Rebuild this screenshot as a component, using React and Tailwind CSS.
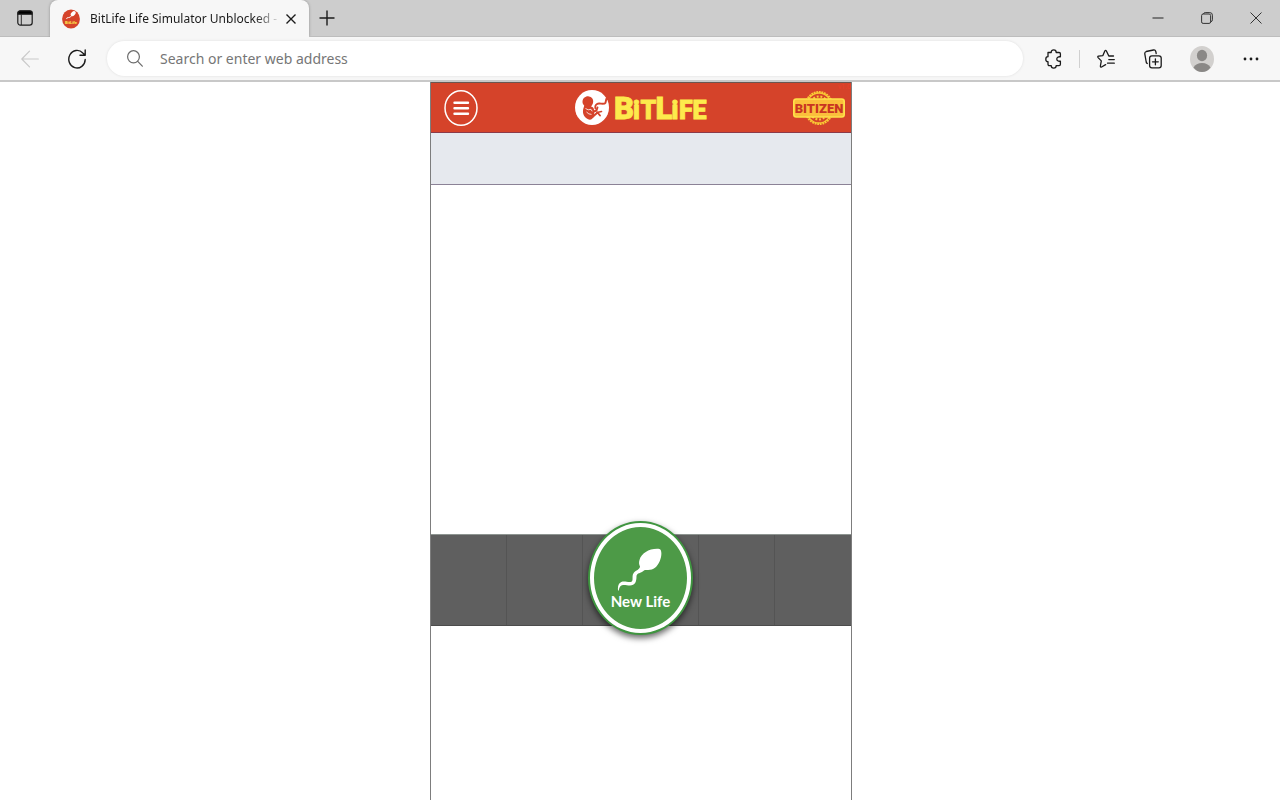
import React from 'react';

function TabActionsIcon() {
  return (
    <svg className="w-4 h-4" viewBox="0 0 16 16" fill="none" stroke="#1b1b1b" strokeWidth="1.2">
      <rect x="0.8" y="0.8" width="14.4" height="14.4" rx="2.6" />
      <path d="M1 2.8Q1 1 3 1h10q2 0 2 1.8V4.200H1Z" fill="#000" />
      <path d="M4.300 4.500v10.500" strokeWidth="0.9" />
    </svg>
  );
}

function Favicon() {
  return (
    <svg className="w-[18px] h-5 shrink-0" viewBox="0 0 18 20">
      <ellipse cx="9" cy="10" rx="8.900" ry="9.600" fill="#d5432a" />
      <path d="M4.500 10q.3-1.700 2.200-1.500T9.500 6.500" fill="none" stroke="#fff" strokeWidth="0.900" />
      <ellipse cx="11.200" cy="4.600" rx="2.900" ry="1.900" transform="rotate(-45 11.200 4.600)" fill="#fff" />
      <text x="9" y="14.800" textAnchor="middle" fontFamily="Roboto, sans-serif" fontWeight="900" fontSize="4" fill="#fde24a">BitLife</text>
    </svg>
  );
}

function FetusIcon() {
  return (
    <svg className="w-[34px] h-[35px]" viewBox="0 0 34 35">
      <ellipse cx="17" cy="17.500" rx="17" ry="17.500" fill="#fff" />
      <path fill="#d5432a" d="M7.500 12C7.500 8.300 10.500 6 13.800 6.400c3.600.4 5 3.600 4.200 6.600-.5 1.900-1.700 2.600-1.800 3.800 1.800.2 2.800 1.400 2.900 3.500.2 2.500.4 4.800-.5 6.400-1.300 2.700-3.200 3.600-5.500 2.600-3.500-1.600-5.500-5-5.100-8.800.2-2 1-3.300 1.200-4.900C8.300 14.700 7.500 13.500 7.500 12Z" />
      <g fill="none" stroke="#d5432a" strokeLinecap="round" strokeLinejoin="round">
        <path d="M17.500 27 22.500 22.500 25 25.500M17.500 22l4-1.500 1-3" strokeWidth="1.900" />
        <path d="M22 22.500 26.500 21.500" strokeWidth="1.600" />
        <path d="M20.500 18.500c-.8-3 1-5.300 4-5 2.500.2 5 1 6-.8l.8-3.700 2.700-.7" strokeWidth="1.900" />
      </g>
      <path d="M10.500 18.500q2.600 2.200 5.500.8l1.200 2M11.500 22q2.200 2.600 5 2.400" fill="none" stroke="#fff" strokeWidth="0.800" />
    </svg>
  );
}

function Wordmark() {
  return (
    <svg className="w-[94px] h-[30px] overflow-visible" viewBox="0 0 94 30" fill="#fdea4c" stroke="#fdea4c" strokeWidth="0.800">
      <text y="26" fontFamily="Roboto, sans-serif" fontWeight="900" fontSize="25">
        <tspan x="1" fontSize="31">B</tspan>
        <tspan x="20">i</tspan>
        <tspan x="27.500">T</tspan>
        <tspan x="42.500" fontSize="31">L</tspan>
        <tspan x="58.500">i</tspan>
        <tspan x="66">F</tspan>
        <tspan x="79.500">E</tspan>
      </text>
    </svg>
  );
}

function BitizenBadge() {
  return (
    <svg className="w-[52px] h-9" viewBox="0 0 52 36">
      <g fill="none" stroke="#f9c935">
        <ellipse cx="26" cy="18" rx="14" ry="16" strokeWidth="2.200" strokeDasharray="1.800 0.800" />
        <ellipse cx="26" cy="18" rx="13" ry="15" strokeWidth="1.300" />
        <ellipse cx="26" cy="18" rx="10" ry="11.500" strokeWidth="2" strokeDasharray="1.900 1.800" />
      </g>
      <rect x="0.800" y="9" width="50.400" height="18" rx="2.500" fill="#fbbf3c" stroke="#fde24a" strokeWidth="1.600" />
      <text x="26" y="22.800" textAnchor="middle" fontFamily="Roboto, sans-serif" fontWeight="900" fontSize="13" fill="#c93522">BITIZEN</text>
    </svg>
  );
}

function SpermIcon() {
  return (
    <svg className="w-11 h-11" viewBox="2 -1 44 44" fill="#fff" overflow="visible">
      <path d="M42.500 1C45 2 45 8 42.800 13 40.300 19 36 22.300 30.500 22 29 22 28 21.800 27 22.500 23.500 25.800 20 24.500 19.500 28 19.500 34 18 37.500 13 37.500 8 37.500 3 34.500 1.800 42.500L1 42.500C.5 36 3 33.500 7 33.500 10 33.500 15 35.500 15.500 32 15.800 29 15 27 17 24.500 19 22 22.500 22 23 18.500 22 16.500 21.700 14.500 22.500 12 24.500 5 33 0 42.500 1Z" />
    </svg>
  );
}

function TabStrip() {
  return (
    <div className="flex h-[37px] bg-[#cdcdcd]">
      <button aria-label="Tab actions" className="w-[50px] flex items-center justify-center border-b border-[#bdbdbd]">
        <TabActionsIcon />
      </button>
      <div className="w-[259px] flex items-center bg-[#f7f7f7] rounded-t-lg pl-3 shadow-[0_0_3px_rgba(0,0,0,0.3)]">
        <Favicon />
        <div className="w-[191px] ml-[10px] whitespace-nowrap font-['Noto_Sans'] text-[12px] text-[#1b1b1b] [mask-image:linear-gradient(to_right,black_165px,transparent_191px)]">
          BitLife Life Simulator Unblocked -
        </div>
        <button aria-label="Close tab" className="w-5 h-5 flex items-center justify-center">
          <svg className="w-[10px] h-[10px]" viewBox="0 0 10 10" stroke="#1b1b1b" strokeWidth="1.400">
            <path d="M0.500 0.500l9 9M9.500 0.500l-9 9" />
          </svg>
        </button>
      </div>
      <div className="flex-1 flex items-center border-b border-[#bdbdbd]">
        <button aria-label="New tab" className="w-9 h-9 flex items-center justify-center">
          <svg className="w-4 h-4" viewBox="0 0 16 16" stroke="#1b1b1b" strokeWidth="1.400">
            <path d="M8 0.500v15M0.500 8h15" />
          </svg>
        </button>
        <div className="ml-auto flex">
          <button aria-label="Minimize" className="w-[49px] h-9 flex items-center justify-center">
            <svg className="w-3 h-3" viewBox="0 0 12 12" stroke="#333" strokeWidth="1.100">
              <path d="M0.500 6h11" />
            </svg>
          </button>
          <button aria-label="Restore" className="w-[49px] h-9 flex items-center justify-center">
            <svg className="w-3 h-3" viewBox="0 0 12 12" fill="none" stroke="#333" strokeWidth="1">
              <rect x="0.600" y="2" width="9" height="9.400" rx="1.500" />
              <path d="M2.500 2Q2.800.6 4.200.6h4.600q2.600 0 2.600 2.600v4.600q0 1.600-1.600 2" />
            </svg>
          </button>
          <button aria-label="Close window" className="w-[49px] h-9 flex items-center justify-center">
            <svg className="w-3 h-3" viewBox="0 0 12 12" stroke="#333" strokeWidth="1">
              <path d="M0.500 0.500l11 11M11.500 0.500l-11 11" />
            </svg>
          </button>
        </div>
      </div>
    </div>
  );
}

function Toolbar() {
  return (
    <div className="flex items-center h-[45px] bg-[#f7f7f7] border-b-2 border-[#c8c8c8] pl-[6px] pr-[11px]">
      <button aria-label="Back" className="w-12 h-9 flex items-center justify-center">
        <svg className="w-[18px] h-[18px]" viewBox="0 0 18 18" fill="none" stroke="#c9c9c9" strokeWidth="1.200" strokeLinecap="round" strokeLinejoin="round">
          <path d="M17.300 9H0.800M8.500 1.200 0.800 9l7.700 7.800" />
        </svg>
      </button>
      <button aria-label="Refresh" className="w-[46px] h-9 flex items-center justify-center">
        <svg className="w-[18px] h-5" viewBox="0 0 18 20" fill="none" stroke="#1b1b1b" strokeWidth="1.400" strokeLinecap="round" strokeLinejoin="round">
          <path d="M17.200 10.500A8.200 8.800 0 1 1 14.800 4L17 6M17.200 1v5.200h-5.200" />
        </svg>
      </button>
      <label className="ml-[7px] mr-3 flex-1 h-[35px] flex items-center rounded-full bg-white pl-5 shadow-[0_0_3px_rgba(0,0,0,0.1)]">
        <svg className="w-4 h-[17px]" viewBox="0 0 16 17" fill="none" stroke="#6b6b6b" strokeWidth="1.200" strokeLinecap="round">
          <ellipse cx="6.500" cy="6.800" rx="5.900" ry="6.100" />
          <path d="M10.700 11.300 15.300 16.200" />
        </svg>
        <input type="text" aria-label="Address" placeholder="Search or enter web address" className="flex-1 ml-[17px] bg-transparent outline-none font-['Noto_Sans'] text-[14px] placeholder:text-[#767676]" />
      </label>
      <button aria-label="Extensions" className="w-9 h-9 flex items-center justify-center">
        <svg className="w-[17px] h-5" viewBox="0 0 17 20" fill="none" stroke="#1b1b1b" strokeWidth="1.300" strokeLinejoin="round">
          <path d="M3 3.500h3.200C6.200 1.800 7.200.9 8.700.9s2.500.9 2.500 2.600h2.900q1.300 0 1.300 1.300v3c-2.300-.2-3.600.6-3.600 2.200s1.300 2.500 3.600 2.200v3.100q0 1.300-1.300 1.300h-2.900c0 1.700-1 2.600-2.500 2.600s-2.500-.9-2.500-2.600H4.300Q3 16.600 3 15.300v-2.600C1.500 12.700.8 11.700.8 10.200S1.500 7.700 3 7.700Z" />
        </svg>
      </button>
      <div className="mx-2 w-px h-[18px] bg-[#d0d0d0]" />
      <button aria-label="Favorites" className="w-9 h-9 flex items-center justify-center">
        <svg className="w-[18px] h-5" viewBox="0 0 18 20" fill="none" stroke="#1b1b1b" strokeWidth="1.300" strokeLinecap="round" strokeLinejoin="round">
          <path d="M16.500 7h-4.700L9.400 2Q8.600.6 7.800 2L5.900 6.600 1.500 7.200Q.3 7.500 1.100 8.600L4.300 11.900 3.400 17q0 1.500 1.200 1L8.600 15.600M11.800 10.600h5.500M10.500 14.200h6.800" />
        </svg>
      </button>
      <button aria-label="Collections" className="ml-[11px] w-9 h-9 flex items-center justify-center">
        <svg className="w-[18px] h-5" viewBox="0 0 18 20" fill="none" stroke="#1b1b1b" strokeWidth="1.300" strokeLinecap="round">
          <rect x="5.600" y="6.800" width="11.600" height="12" rx="2.300" />
          <path d="M11.400 9.800v6M8.500 12.800h5.800M3.300 14.500Q2.400 14 2.200 13L.8 4.800Q.6 3 2.200 2.500L9.500 1q1.700-.3 2.200 1.200l.5 2.300" />
        </svg>
      </button>
      <button aria-label="Profile" className="ml-[13px] w-9 h-9 flex items-center justify-center">
        <svg className="w-6 h-[26px]" viewBox="0 0 24 26">
          <ellipse cx="12" cy="13" rx="12" ry="13" fill="#d2d0ce" />
          <ellipse cx="12" cy="9.500" rx="5.100" ry="5.800" fill="#8a8886" />
          <path d="M3.500 21.500Q6 17 12 17t8.500 4.500Q17 26 12 26T3.500 21.500Z" fill="#8a8886" />
        </svg>
      </button>
      <button aria-label="Settings and more" className="ml-[13px] w-9 h-9 flex items-center justify-center">
        <svg className="w-4 h-1" viewBox="0 0 16 4" fill="#1b1b1b">
          <circle cx="2" cy="2" r="1.400" />
          <circle cx="8" cy="2" r="1.400" />
          <circle cx="14" cy="2" r="1.400" />
        </svg>
      </button>
    </div>
  );
}

function Game() {
  return (
    <main className="w-full max-w-[422px] mx-auto flex-1 flex flex-col border-x border-[#7d7d7d] bg-white">
      <header className="relative h-[51px] grid grid-cols-3 items-center bg-[#d5432a] border-t border-b border-t-[#6b5650] border-b-[#8c3a48]">
        <button aria-label="Menu" className="ml-[13px] w-[34px]">
          <svg className="w-[34px] h-9" viewBox="0 0 34 36" fill="none" stroke="#fff">
            <ellipse cx="17" cy="18" rx="16" ry="17.200" strokeWidth="1.500" />
            <path d="M10.500 12.700h13.500M10.500 18.200h13.500M10.500 23.700h13.500" strokeWidth="2.400" strokeLinecap="round" />
          </svg>
        </button>
        <div className="flex items-center justify-center gap-1">
          <FetusIcon />
          <Wordmark />
        </div>
        <div className="flex justify-end pr-[6px]">
          <BitizenBadge />
        </div>
        <span className="absolute top-0 right-0 font-['Roboto'] text-[7px] leading-[9px] text-[#e9402c]">v1.0</span>
      </header>
      <div className="h-[52px] bg-[#e6e9ee] border-b border-[#8b8296]" />
      <div className="h-[349px]" />
      <nav className="h-[92px] grid grid-cols-[1fr_1fr_116px_1fr_1fr] bg-[#5f5f5f] border-t border-b border-t-[#8e9591] border-b-[#4c4c4c]">
        <div className="border-r border-[#545454]" />
        <div className="border-r border-[#545454]" />
        <div className="flex items-start justify-center border-r border-[#545454]">
          <button className="relative shrink-0 w-[105px] h-[114px] -mt-[14px] -mb-3 flex flex-col items-center rounded-[50%] border-2 border-[#3f9540] bg-[#4d9a47] pt-6 shadow-[0_3px_6px_rgba(0,0,0,0.6)] before:absolute before:inset-0 before:rounded-[50%] before:border-4 before:border-white">
            <SpermIcon />
            <span className="font-['Lato'] font-bold text-[15px] leading-5 text-white">New Life</span>
          </button>
        </div>
        <div className="border-r border-[#545454]" />
        <div />
      </nav>
    </main>
  );
}

export default function App() {
  return (
    <div className="min-h-screen flex flex-col bg-white">
      <TabStrip />
      <Toolbar />
      <div className="flex-1 flex pl-0.5">
        <Game />
      </div>
    </div>
  );
}
